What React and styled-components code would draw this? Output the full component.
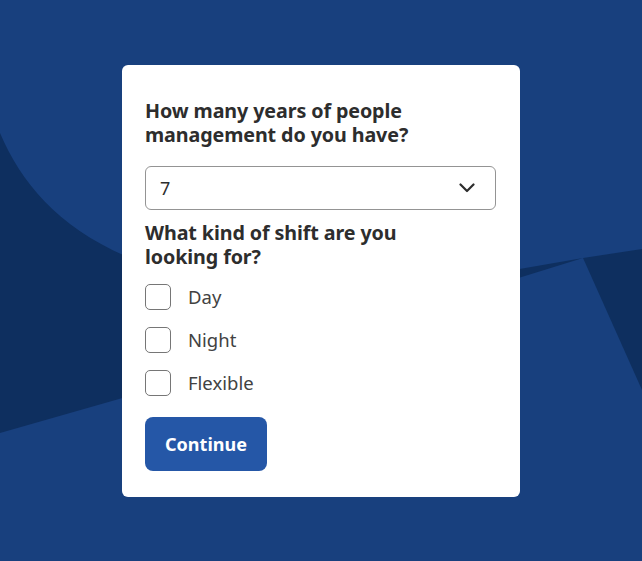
import React, { useState } from "react"
import styled, { createGlobalStyle } from "styled-components"

const GlobalStyle = createGlobalStyle`
    html, body {
        margin: 0;
        padding: 0;
        background: #18407e;
    }
    * {
        box-sizing: border-box;
    }
`

const Page = styled.div`
    position: relative;
    min-height: 100vh;
    display: flex;
    align-items: center;
    justify-content: center;
    overflow: hidden;
    background: #18407e;
    font-family: "Noto Sans", "Open Sans", sans-serif;
`

const Backdrop = styled.svg`
    position: absolute;
    top: 0;
    left: 0;
    width: 642px;
    height: 561px;
    z-index: 0;
`

const Card = styled.form`
    position: relative;
    z-index: 1;
    width: 398px;
    background: #ffffff;
    border-radius: 6px;
    padding: 34px 24px 26px 23px;
    display: flex;
    flex-direction: column;
`

const Question = styled.h2`
    margin: 0;
    width: 275px;
    font-size: 19.7px;
    line-height: 24px;
    font-weight: 700;
    color: #2d2d2d;
    letter-spacing: -0.1px;
`

const SelectBox = styled.div`
    margin: 19px 0 11px;
    height: 44px;
    border: 1px solid #949494;
    border-radius: 6px;
    display: flex;
    align-items: center;
    justify-content: space-between;
    padding: 0 20px 0 14px;
    font-size: 18px;
    color: #2d2d2d;
    cursor: pointer;
`

const Options = styled.div`
    display: flex;
    flex-direction: column;
    gap: 17px;
    margin-top: 15px;
`

const OptionRow = styled.label`
    display: flex;
    align-items: center;
    gap: 17px;
    cursor: pointer;
    font-size: 18.5px;
    color: #424242;
`

const Box = styled.span`
    width: 26px;
    height: 26px;
    border: 1.5px solid #767676;
    border-radius: 5px;
    background: ${p => (p.$checked ? "#2557a7" : "#fff")};
    display: inline-flex;
    align-items: center;
    justify-content: center;
`

const Button = styled.button`
    margin-top: 21px;
    align-self: flex-start;
    width: 122px;
    height: 54px;
    border: none;
    border-radius: 8px;
    background: #2557a7;
    color: #fff;
    font-family: "Noto Sans", sans-serif;
    font-size: 18px;
    font-weight: 700;
    cursor: pointer;
`

const Chevron = () => (
    <svg width="16" height="10" viewBox="0 0 16 10">
        <path d="M1.5 1.5 L8 8 L14.5 1.5" fill="none" stroke="#2d2d2d" strokeWidth="2.2" strokeLinecap="round" strokeLinejoin="round" />
    </svg>
)

const shifts = ["Day", "Night", "Flexible"]

export default function App() {
    const [picked, setPicked] = useState([])
    const toggle = s => setPicked(p => (p.includes(s) ? p.filter(x => x !== s) : [...p, s]))

    return (
        <Page>
            <GlobalStyle />
            <Backdrop viewBox="0 0 642 561">
                <path d="M0 133 C22 185 62 232 140 262 L140 393 L0 433 Z" fill="#0e2f5f" />
                <path d="M480 290 L583 258 L480 276 Z" fill="#0e2f5f" />
                <path d="M583 258 L642 249 L642 390 Z" fill="#0e2f5f" />
            </Backdrop>
            <Card onSubmit={e => e.preventDefault()}>
                <Question>How many years of people management do you have?</Question>
                <SelectBox>
                    <span>7</span>
                    <Chevron />
                </SelectBox>
                <Question>What kind of shift are you looking for?</Question>
                <Options>
                    {shifts.map(s => (
                        <OptionRow key={s} onClick={() => toggle(s)}>
                            <Box $checked={picked.includes(s)} />
                            {s}
                        </OptionRow>
                    ))}
                </Options>
                <Button type="submit">Continue</Button>
            </Card>
        </Page>
    )
}
